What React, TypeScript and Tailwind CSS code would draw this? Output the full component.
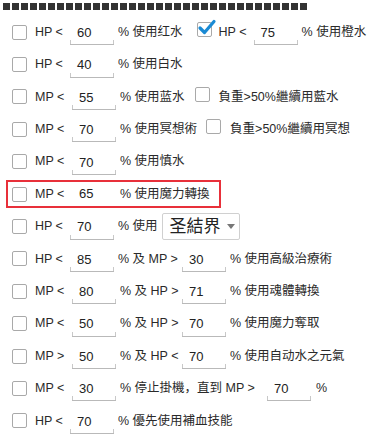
import React from 'react';

const font = { fontFamily: '"Liberation Sans", "Noto Sans CJK SC", sans-serif' };

function Box({ checked = false }: { checked?: boolean }) {
  return (
    <span className="relative inline-block w-[15px] h-[15px] shrink-0 border border-[#a9a9a9] rounded-[2px] bg-white">
      {checked && (
        <svg className="absolute -top-[4px] -left-[1px]" width="20" height="18" viewBox="0 0 20 18">
          <path d="M3 9 L7.5 13.5 L17 2.5" fill="none" stroke="#1a8ad4" strokeWidth="3.2" strokeLinecap="round" strokeLinejoin="round" />
        </svg>
      )}
    </span>
  );
}

function Field({ value }: { value: string }) {
  return (
    <span className="flex h-[24px] w-[44px] shrink-0 border-b border-[#b9b9b9] mt-[2px]">
      <span className="self-end w-px h-[4px] bg-[#c8c8c8]" />
      <span className="flex-1 flex items-center pl-[6px] text-[13px] text-[#222]">{value}</span>
      <span className="self-end w-px h-[4px] bg-[#c8c8c8]" />
    </span>
  );
}

function Txt({ children, cls = '' }: { children: React.ReactNode; cls?: string }) {
  return <span className={'text-[12.5px] text-[#2a2a2a] whitespace-nowrap ' + cls}>{children}</span>;
}

function Row({ children }: { children: React.ReactNode }) {
  return <div className="flex items-center h-[32.4px] pl-[12px]">{children}</div>;
}

export default function App() {
  const squares = Array.from({ length: 34 });
  return (
    <div className="w-[389px] h-[440px] bg-white overflow-hidden" style={font}>
      <div className="flex gap-[2px] pl-[3px] pt-[3px] h-[16px]">
        {squares.map((_, i) => (
          <span key={i} className="w-[7px] h-[7px] bg-[#333]" />
        ))}
      </div>

      <Row>
        <Box />
        <Txt cls="ml-[8px] w-[35px]">HP &lt;</Txt>
        <Field value="60" />
        <Txt cls="ml-[4px]">% 使用红水</Txt>
        <span className="ml-[14px]"><Box checked /></span>
        <Txt cls="ml-[7px] w-[35px]">HP &lt;</Txt>
        <Field value="75" />
        <Txt cls="ml-[4px]">% 使用橙水</Txt>
      </Row>

      <Row>
        <Box />
        <Txt cls="ml-[8px] w-[35px]">HP &lt;</Txt>
        <Field value="40" />
        <Txt cls="ml-[4px]">% 使用白水</Txt>
      </Row>

      <Row>
        <Box />
        <Txt cls="ml-[8px] w-[37px]">MP &lt;</Txt>
        <Field value="55" />
        <Txt cls="ml-[4px]">% 使用蓝水</Txt>
        <span className="ml-[10px]"><Box /></span>
        <Txt cls="ml-[9px]">負重&gt;50%繼續用藍水</Txt>
      </Row>

      <Row>
        <Box />
        <Txt cls="ml-[8px] w-[37px]">MP &lt;</Txt>
        <Field value="70" />
        <Txt cls="ml-[4px]">% 使用冥想術</Txt>
        <span className="ml-[9px]"><Box /></span>
        <Txt cls="ml-[9px]">負重&gt;50%繼續用冥想</Txt>
      </Row>

      <Row>
        <Box />
        <Txt cls="ml-[8px] w-[37px]">MP &lt;</Txt>
        <Field value="70" />
        <Txt cls="ml-[4px]">% 使用慎水</Txt>
      </Row>

      <div className="flex items-center h-[32.4px] pl-[6px]">
        <div className="flex items-center w-[215px] h-[28px] border-2 border-[#e8303a] pl-[4px]">
          <Box />
          <Txt cls="ml-[8px] w-[37px]">MP &lt;</Txt>
          <span className="flex items-center w-[44px] h-[24px] pl-[7px] text-[13px] text-[#222]">65</span>
          <Txt cls="ml-[4px]">% 使用魔力轉換</Txt>
        </div>
      </div>

      <Row>
        <Box />
        <Txt cls="ml-[8px] w-[35px]">HP &lt;</Txt>
        <Field value="70" />
        <Txt cls="ml-[4px]">% 使用</Txt>
        <span className="ml-[4px] flex items-center justify-between w-[78px] h-[27px] border border-[#d0d0d0] rounded-[2px] pl-[7px] pr-[4px] bg-white">
          <span className="text-[17px] text-[#222]">圣結界</span>
          <span className="w-0 h-0 border-l-[4px] border-r-[4px] border-t-[5px] border-l-transparent border-r-transparent border-t-[#777]" />
        </span>
      </Row>

      <Row>
        <Box />
        <Txt cls="ml-[8px] w-[35px]">HP &lt;</Txt>
        <Field value="85" />
        <Txt cls="ml-[4px] w-[64px]">% 及 MP &gt;</Txt>
        <Field value="30" />
        <Txt cls="ml-[4px]">% 使用高級治療術</Txt>
      </Row>

      <Row>
        <Box />
        <Txt cls="ml-[8px] w-[37px]">MP &lt;</Txt>
        <Field value="80" />
        <Txt cls="ml-[4px] w-[62px]">% 及 HP &gt;</Txt>
        <Field value="71" />
        <Txt cls="ml-[4px]">% 使用魂體轉換</Txt>
      </Row>

      <Row>
        <Box />
        <Txt cls="ml-[8px] w-[37px]">MP &lt;</Txt>
        <Field value="50" />
        <Txt cls="ml-[4px] w-[62px]">% 及 HP &gt;</Txt>
        <Field value="70" />
        <Txt cls="ml-[4px]">% 使用魔力奪取</Txt>
      </Row>

      <Row>
        <Box />
        <Txt cls="ml-[8px] w-[37px]">MP &gt;</Txt>
        <Field value="50" />
        <Txt cls="ml-[4px] w-[62px]">% 及 HP &lt;</Txt>
        <Field value="70" />
        <Txt cls="ml-[4px]">% 使用自动水之元氣</Txt>
      </Row>

      <Row>
        <Box />
        <Txt cls="ml-[8px] w-[37px]">MP &lt;</Txt>
        <Field value="30" />
        <Txt cls="ml-[4px] w-[147px]">% 停止掛機，直到 MP &gt;</Txt>
        <Field value="70" />
        <Txt cls="ml-[5px]">%</Txt>
      </Row>

      <Row>
        <Box />
        <Txt cls="ml-[8px] w-[35px]">HP &lt;</Txt>
        <Field value="70" />
        <Txt cls="ml-[4px]">% 優先使用補血技能</Txt>
      </Row>
    </div>
  );
}
